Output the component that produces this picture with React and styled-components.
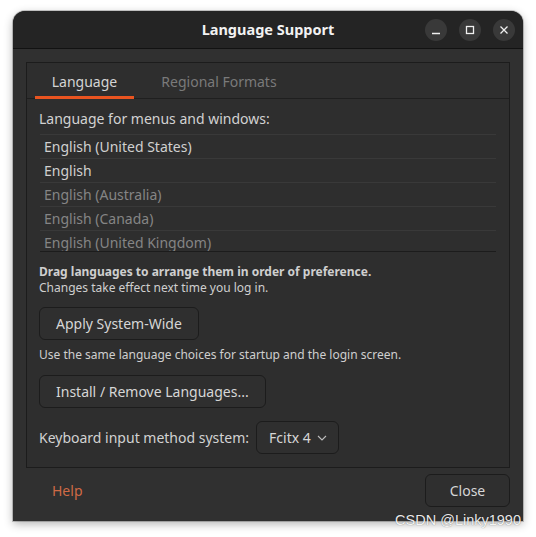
import React from "react";
import styled, { createGlobalStyle } from "styled-components";

const GlobalStyle = createGlobalStyle`
  html, body {
    margin: 0;
    padding: 0;
    background: #ffffff;
  }
  body {
    font-family: "Noto Sans", "Open Sans", sans-serif;
  }
`;

const Page = styled.div`
  position: relative;
  width: 536px;
  height: 537px;
  padding: 11px 0 0 13px;
  box-sizing: border-box;
`;

const Window = styled.div`
  width: 510px;
  height: 510px;
  background: #303030;
  border-radius: 12px 12px 0 0;
  box-shadow: 0 3px 10px rgba(0, 0, 0, 0.3), 0 0 0 1px rgba(0, 0, 0, 0.2);
  display: flex;
  flex-direction: column;
  overflow: hidden;
  color: #d6d6d6;
`;

const TitleBar = styled.div`
  height: 37px;
  flex-shrink: 0;
  background: #242424;
  border-bottom: 1px solid #121212;
  display: grid;
  grid-template-columns: 1fr auto 1fr;
  align-items: center;
  padding: 0 8px;
`;

const Title = styled.div`
  grid-column: 2;
  font-size: 14.5px;
  font-weight: 700;
  color: #f2f2f2;
  margin-top: -1px;
`;

const Controls = styled.div`
  grid-column: 3;
  justify-self: end;
  display: flex;
  gap: 12px;
`;

const CircleButton = styled.div`
  width: 22px;
  height: 22px;
  border-radius: 50%;
  background: #393939;
  display: flex;
  align-items: center;
  justify-content: center;
`;

const Body = styled.div`
  flex: 1;
  display: flex;
  flex-direction: column;
  padding: 13px 13px 14px;
`;

const Frame = styled.div`
  height: 406px;
  box-sizing: border-box;
  border: 1px solid #1c1c1c;
  background: #2e2e2e;
  display: flex;
  flex-direction: column;
`;

const TabBar = styled.div`
  display: flex;
  height: 35px;
  border-bottom: 1px solid #1f1f1f;
  padding-left: 8px;
`;

const Tab = styled.div`
  width: ${p => p.$width}px;
  box-sizing: border-box;
  display: flex;
  align-items: center;
  justify-content: center;
  font-size: 14px;
  color: ${p => (p.$active ? "#d4d4d4" : "#7a7a7a")};
  border-bottom: 3px solid ${p => (p.$active ? "#e95420" : "transparent")};
  padding-top: 3px;
  margin-bottom: -1px;
`;

const Content = styled.div`
  padding: 10px 13px 0 12px;
  display: flex;
  flex-direction: column;
`;

const Label = styled.div`
  font-size: 14px;
  line-height: 20px;
  color: #d2d2d2;
  margin-bottom: 5px;
`;

const List = styled.div`
  margin-left: 1px;
  height: 117px;
  overflow: hidden;
  border-bottom: 1px solid #1c1c1c;
`;

const Row = styled.div`
  height: 24px;
  box-sizing: border-box;
  border-top: 1px solid #393939;
  padding-left: 4px;
  display: flex;
  align-items: center;
  font-size: 14px;
  color: ${p => (p.$dim ? "#858585" : "#d0d0d0")};
`;

const Hint = styled.div`
  margin-top: 12px;
  font-size: 12px;
  line-height: 16px;
  color: #cfcfcf;
`;

const Strong = styled.div`
  font-weight: 700;
`;

const Button = styled.div`
  height: 33px;
  box-sizing: border-box;
  padding: 0 16px;
  margin-top: ${p => p.$top || 0}px;
  border: 1px solid #1c1c1c;
  border-radius: 6px;
  background: #2f2f2f;
  display: inline-flex;
  align-items: center;
  font-size: 14px;
  color: #d6d6d6;
  align-self: flex-start;
`;

const Note = styled.div`
  font-size: 12px;
  line-height: 14px;
  color: #cfcfcf;
  margin: 8px 0 13px;
`;

const InputRow = styled.div`
  display: flex;
  align-items: center;
  gap: 7px;
  margin-top: 13px;
`;

const InputLabel = styled.div`
  font-size: 14px;
  color: #d2d2d2;
`;

const Dropdown = styled(Button)`
  width: 83px;
  padding: 0 0 0 12px;
  gap: 6px;
`;

const Footer = styled.div`
  display: flex;
  justify-content: space-between;
  align-items: center;
  margin-top: 6px;
`;

const FlatButton = styled.div`
  padding-left: 26px;
  font-size: 14px;
  color: #cf6a45;
`;

const CloseButton = styled(Button)`
  width: 85px;
  justify-content: center;
  padding: 0;
`;

const Watermark = styled.div`
  position: absolute;
  right: 15px;
  bottom: 9px;
  font-family: "Liberation Sans", Arial, sans-serif;
  font-size: 14.5px;
  color: rgba(255, 255, 255, 0.92);
  text-shadow: 0 0 1px rgba(0, 0, 0, 0.5);
`;

const languages = [
  { name: "English (United States)" },
  { name: "English" },
  { name: "English (Australia)", dim: true },
  { name: "English (Canada)", dim: true },
  { name: "English (United Kingdom)", dim: true }
];

const Icon = ({ children }) => (
  <svg width="10" height="10" viewBox="0 0 10 10" fill="none" stroke="#f0f0f0" strokeWidth="1.3">
    {children}
  </svg>
);

export default function App() {
  return (
    <Page>
      <GlobalStyle />
      <Window>
        <TitleBar>
          <Title>Language Support</Title>
          <Controls>
            <CircleButton>
              <Icon>
                <path d="M1 8.5h8" />
              </Icon>
            </CircleButton>
            <CircleButton>
              <Icon>
                <rect x="1.5" y="1.5" width="7" height="7" />
              </Icon>
            </CircleButton>
            <CircleButton>
              <Icon>
                <path d="M1.5 1.5l7 7M8.5 1.5l-7 7" />
              </Icon>
            </CircleButton>
          </Controls>
        </TitleBar>
        <Body>
          <Frame>
            <TabBar>
              <Tab $active $width={99}>Language</Tab>
              <Tab $width={170}>Regional Formats</Tab>
            </TabBar>
            <Content>
              <Label>Language for menus and windows:</Label>
              <List>
                {languages.map(lang => (
                  <Row key={lang.name} $dim={lang.dim}>
                    {lang.name}
                  </Row>
                ))}
              </List>
              <Hint>
                <Strong>Drag languages to arrange them in order of preference.</Strong>
                Changes take effect next time you log in.
              </Hint>
              <Button $top={11}>Apply System-Wide</Button>
              <Note>Use the same language choices for startup and the login screen.</Note>
              <Button>Install / Remove Languages...</Button>
              <InputRow>
                <InputLabel>Keyboard input method system:</InputLabel>
                <Dropdown>
                  Fcitx 4
                  <svg width="10" height="6" viewBox="0 0 10 6" fill="none" stroke="#bdbdbd" strokeWidth="1.1">
                    <path d="M1 1l4 4 4-4" />
                  </svg>
                </Dropdown>
              </InputRow>
            </Content>
          </Frame>
          <Footer>
            <FlatButton>Help</FlatButton>
            <CloseButton>Close</CloseButton>
          </Footer>
        </Body>
      </Window>
      <Watermark>CSDN @Linky1990</Watermark>
    </Page>
  );
}
